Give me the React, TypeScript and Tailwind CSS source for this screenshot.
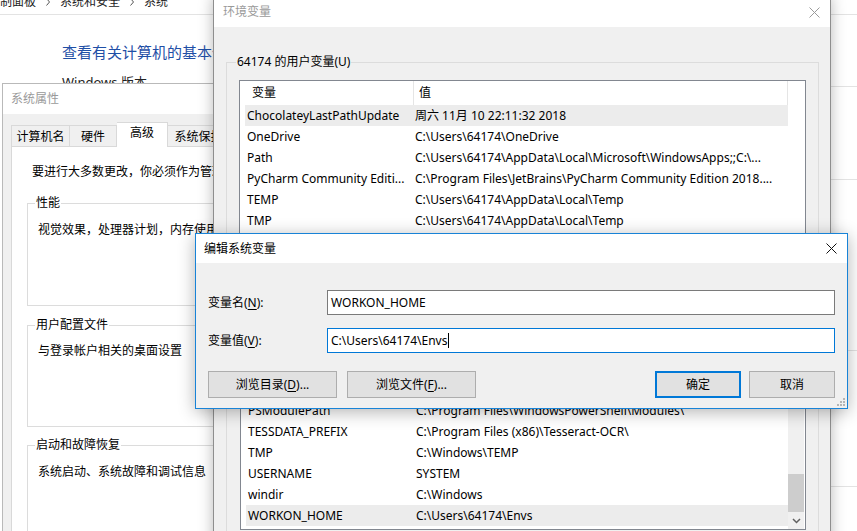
import React from "react";

const Chevron = () => (
  <svg width="6" height="8" viewBox="0 0 6 8" className="mx-[9px]">
    <path d="M1.5 0.5 L4.5 4 L1.5 7.5" fill="none" stroke="#555" strokeWidth="1" />
  </svg>
);

const CloseX = ({ color }: { color: string }) => (
  <svg width="11" height="11" viewBox="0 0 11 11">
    <path d="M0.5 0.5 L10.5 10.5 M10.5 0.5 L0.5 10.5" stroke={color} strokeWidth="1" />
  </svg>
);

type Row = [string, string];

const userRows: Row[] = [
  ["ChocolateyLastPathUpdate", "周六 11月 10 22:11:32 2018"],
  ["OneDrive", "C:\\Users\\64174\\OneDrive"],
  ["Path", "C:\\Users\\64174\\AppData\\Local\\Microsoft\\WindowsApps;;C:\\..."],
  ["PyCharm Community Editi...", "C:\\Program Files\\JetBrains\\PyCharm Community Edition 2018...."],
  ["TEMP", "C:\\Users\\64174\\AppData\\Local\\Temp"],
  ["TMP", "C:\\Users\\64174\\AppData\\Local\\Temp"],
];

const sysRows: Row[] = [
  ["ComSpec", "C:\\Windows\\system32\\cmd.exe"],
  ["NUMBER_OF_PROCESSORS", "8"],
  ["OS", "Windows_NT"],
  ["Path", "C:\\ProgramData\\Oracle\\Java\\javapath;C:\\Windows\\system32;..."],
  ["PSModulePath", "C:\\Program Files\\WindowsPowerShell\\Modules\\"],
  ["TESSDATA_PREFIX", "C:\\Program Files (x86)\\Tesseract-OCR\\"],
  ["TMP", "C:\\Windows\\TEMP"],
  ["USERNAME", "SYSTEM"],
  ["windir", "C:\\Windows"],
  ["WORKON_HOME", "C:\\Users\\64174\\Envs"],
];

function ListRows({ rows, selected }: { rows: Row[]; selected: number }) {
  return (
    <>
      {rows.map((r, i) => (
        <div
          key={i}
          className={
            "flex h-[21px] shrink-0 items-center whitespace-nowrap " +
            (i === selected ? "bg-[#ececec]" : "")
          }
        >
          <div className="w-[164px] shrink-0 overflow-hidden pl-[2px]">{r[0]}</div>
          <div className="flex-1 overflow-hidden pl-[6px]">{r[1]}</div>
        </div>
      ))}
    </>
  );
}

function ListHeader() {
  return (
    <div className="flex h-[24px] shrink-0 items-center bg-white">
      <div className="flex h-full w-[169px] shrink-0 items-center border-r border-[#e5e5e5] pl-[7px]">变量</div>
      <div className="flex h-full flex-1 items-center border-r border-[#e5e5e5] pl-[5px]">值</div>
    </div>
  );
}

function Group({ label, className, children }: { label: string; className: string; children?: React.ReactNode }) {
  return (
    <div className={"relative border border-[#dcdcdc] " + className}>
      <span className="absolute -top-[9px] left-[7px] bg-white px-px leading-[16px]">{label}</span>
      {children}
    </div>
  );
}

export default function App() {
  return (
    <div className="relative h-[531px] w-[857px] overflow-hidden bg-white font-['Noto_Sans','Noto_Sans_CJK_SC',sans-serif] text-[12px] leading-[16px] text-black">
      {/* Control panel background */}
      <div className="absolute left-0 top-[-6px] flex items-center whitespace-nowrap text-[12px] text-[#222]">
        <span>制面板</span>
        <Chevron />
        <span>系统和安全</span>
        <Chevron />
        <span>系统</span>
      </div>
      <div className="absolute left-0 right-0 top-[14px] h-px bg-[#e3e3e3]" />
      <div className="absolute left-[830px] right-0 top-[86px] h-px bg-[#e3e3e3]" />
      <div className="absolute left-[830px] right-0 top-[179px] h-px bg-[#e3e3e3]" />
      <div className="absolute left-[830px] right-0 top-[350px] h-px bg-[#e3e3e3]" />
      <div className="absolute left-[830px] right-0 top-[486px] h-px bg-[#e3e3e3]" />
      <div className="absolute left-[62px] top-[41px] whitespace-nowrap text-[15px] leading-[22px] text-[#1f4fa6]">
        查看有关计算机的基本信息
      </div>
      <div className="absolute left-[62px] top-[74px] whitespace-nowrap text-[13px] text-[#222]">Windows 版本</div>

      {/* System properties window */}
      <div className="absolute left-[2px] top-[83px] flex h-[480px] w-[440px] flex-col border border-[#b9b9b9] bg-[#f0f0f0]">
        <div className="flex h-[30px] shrink-0 items-center bg-white pl-[8px] text-[#9a9a9a]">系统属性</div>
        <div className="flex flex-1 flex-col pl-[8px] pt-[9px]">
          <div className="flex h-[24px] items-end">
            <div className="flex h-[22px] w-[59px] items-center justify-center border border-b-0 border-[#d9d9d9]">计算机名</div>
            <div className="flex h-[22px] w-[47px] items-center justify-center border border-b-0 border-l-0 border-[#d9d9d9]">硬件</div>
            <div className="relative z-10 flex h-[25px] w-[51px] items-start justify-center border border-b-0 border-l-0 border-[#d9d9d9] bg-white pt-[2px]">高级</div>
            <div className="flex h-[22px] w-[62px] items-center justify-center border border-b-0 border-l-0 border-[#d9d9d9]">系统保护</div>
          </div>
          <div className="-mt-px flex flex-1 flex-col border border-[#d9d9d9] bg-white pl-[15px] pt-[17px]">
            <div className="ml-[5px] whitespace-nowrap">要进行大多数更改，你必须作为管理员登录。</div>
            <Group label="性能" className="mt-[23px] h-[103px] w-[390px] pl-[10px] pt-[18px]">
              <div className="whitespace-nowrap">视觉效果，处理器计划，内存使用，以及虚拟内存</div>
            </Group>
            <Group label="用户配置文件" className="mt-[19px] h-[102px] w-[390px] pl-[10px] pt-[17px]">
              <div className="whitespace-nowrap">与登录帐户相关的桌面设置</div>
            </Group>
            <Group label="启动和故障恢复" className="mt-[18px] h-[102px] w-[390px] pl-[10px] pt-[18px]">
              <div className="whitespace-nowrap">系统启动、系统故障和调试信息</div>
            </Group>
          </div>
        </div>
      </div>

      {/* Environment variables window */}
      <div className="absolute left-[213px] top-[-4px] flex h-[560px] w-[618px] flex-col border border-[#8e8e8e] bg-[#f0f0f0] shadow-[0_0_14px_rgba(0,0,0,0.28)]">
        <div className="flex h-[30px] shrink-0 items-center justify-between bg-white pl-[9px] pr-[10px] text-[#9a9a9a]">
          <span>环境变量</span>
          <CloseX color="#9a9a9a" />
        </div>
        <div className="flex flex-col pl-[12px]">
          <div className="relative mt-[35px] h-[191px] w-[593px] border border-[#dcdcdc] pl-[12px] pt-[17px]">
            <span className="absolute -top-[9px] left-[9px] bg-[#f0f0f0] px-px">64174 的用户变量(U)</span>
            <div className="flex h-[160px] w-[567px] flex-col overflow-hidden border border-[#828790] bg-white pl-[5px] pr-[17px]">
              <ListHeader />
              <ListRows rows={userRows} selected={0} />
            </div>
          </div>
          <div className="relative mt-[20px] h-[300px] w-[593px] border border-[#dcdcdc] pl-[13px] pt-[17px]">
            <span className="absolute -top-[9px] left-[9px] bg-[#f0f0f0] px-px">系统变量(S)</span>
            <div className="flex h-[239px] w-[566px] border border-[#828790] bg-white pl-[5px]">
              <div className="flex flex-1 flex-col overflow-hidden">
                <ListHeader />
                <ListRows rows={sysRows} selected={9} />
              </div>
              <div className="mr-[1px] flex w-[16px] shrink-0 flex-col bg-[#f0f0f0]">
                <div className="flex-1" />
                <div className="h-[38px] bg-[#cdcdcd]" />
                <div className="flex h-[17px] items-center justify-center">
                  <svg width="9" height="6" viewBox="0 0 9 6">
                    <path d="M1 1 L4.5 4.5 L8 1" fill="none" stroke="#606060" strokeWidth="1.5" />
                  </svg>
                </div>
              </div>
            </div>
          </div>
        </div>
      </div>

      {/* Edit system variable dialog */}
      <div className="absolute left-[195px] top-[233px] flex h-[176px] w-[653px] flex-col border border-[#1883d7] bg-[#f0f0f0] shadow-[0_3px_16px_rgba(0,0,0,0.3)]">
        <div className="flex h-[29px] shrink-0 items-center justify-between bg-white pl-[8px] pr-[10px]">
          <span>编辑系统变量</span>
          <CloseX color="#111" />
        </div>
        <div className="flex flex-col px-[12px] pt-[27px]">
          <div className="flex items-center">
            <div className="w-[119px] shrink-0">
              变量名(<span className="underline underline-offset-2">N</span>):
            </div>
            <div className="flex h-[25px] flex-1 items-center border border-[#7a7a7a] bg-white pl-[3px]">WORKON_HOME</div>
          </div>
          <div className="mt-[13px] flex items-center">
            <div className="w-[119px] shrink-0">
              变量值(<span className="underline underline-offset-2">V</span>):
            </div>
            <div className="flex h-[25px] flex-1 items-center border border-[#0078d7] bg-white pl-[3px]">
              <span>C:\Users\64174\Envs</span>
              <span className="ml-px h-[15px] w-px bg-black" />
            </div>
          </div>
          <div className="mt-[18px] flex items-center">
            <div className="flex h-[27px] w-[129px] items-center justify-center border border-[#adadad] bg-[#e1e1e1]">
              浏览目录(<span className="underline underline-offset-2">D</span>)...
            </div>
            <div className="ml-[10px] flex h-[27px] w-[129px] items-center justify-center border border-[#adadad] bg-[#e1e1e1]">
              浏览文件(<span className="underline underline-offset-2">F</span>)...
            </div>
            <div className="flex-1" />
            <div className="flex h-[27px] w-[86px] items-center justify-center border-2 border-[#0078d7] bg-[#e1e1e1]">确定</div>
            <div className="ml-[8px] flex h-[27px] w-[86px] items-center justify-center border border-[#adadad] bg-[#e1e1e1]">取消</div>
          </div>
        </div>
        <svg width="8" height="8" viewBox="0 0 8 8" className="absolute bottom-[2px] right-[2px]">
          <rect x="6" y="0" width="2" height="2" fill="#b5b5b5" />
          <rect x="3" y="3" width="2" height="2" fill="#b5b5b5" />
          <rect x="6" y="3" width="2" height="2" fill="#b5b5b5" />
          <rect x="0" y="6" width="2" height="2" fill="#b5b5b5" />
          <rect x="3" y="6" width="2" height="2" fill="#b5b5b5" />
          <rect x="6" y="6" width="2" height="2" fill="#b5b5b5" />
        </svg>
      </div>
    </div>
  );
}
